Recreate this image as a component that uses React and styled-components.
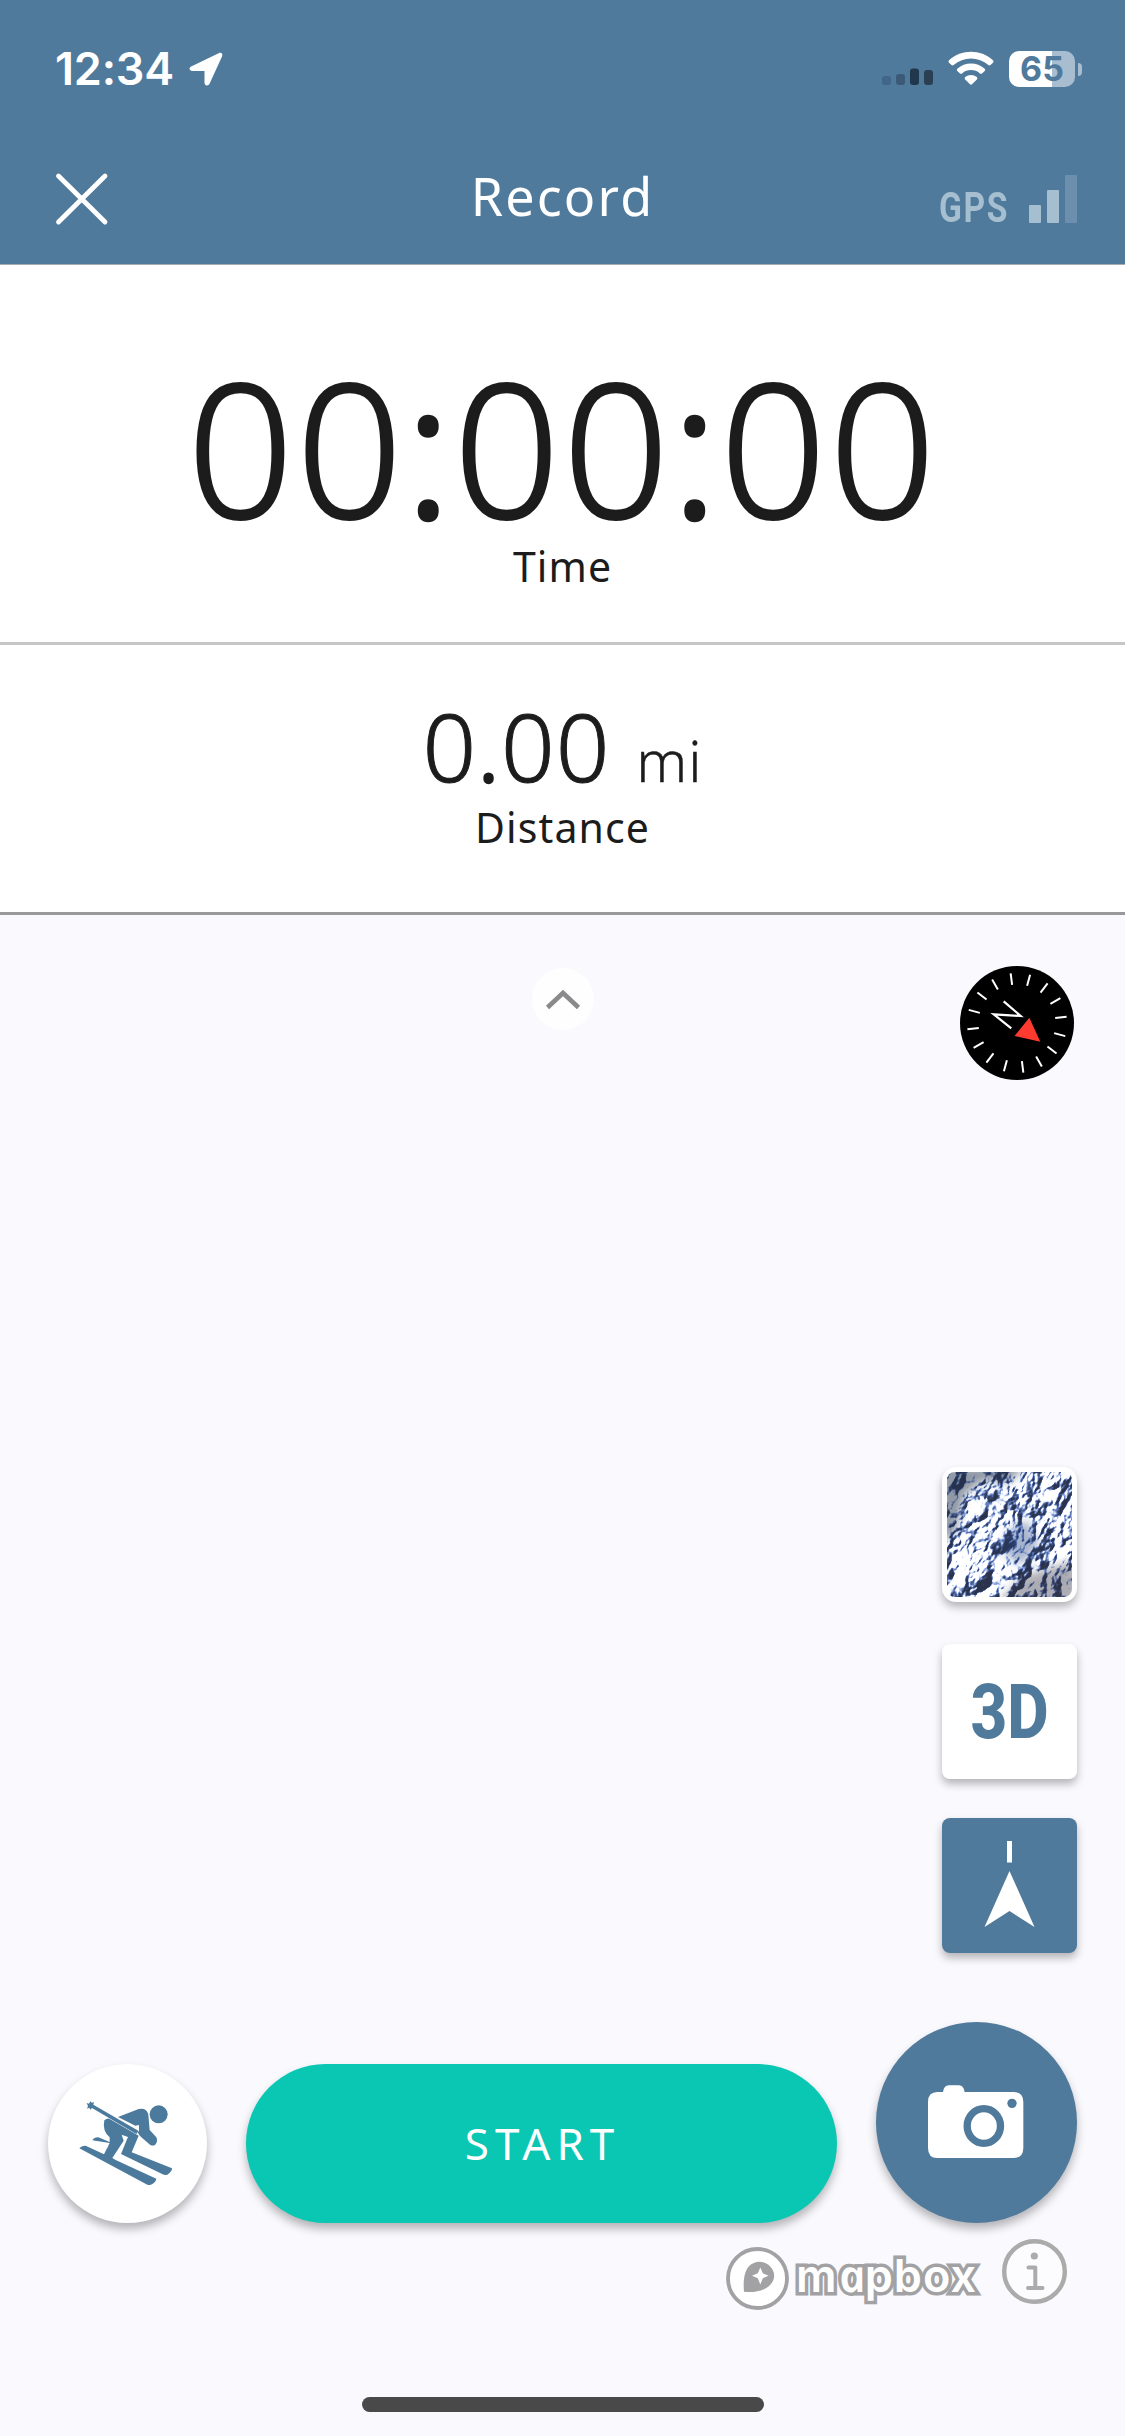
import React from 'react';
import styled, { createGlobalStyle } from 'styled-components';

const BLUE = '#507a9b';
const INK = '#1c1c1c';

const GlobalStyle = createGlobalStyle`
  * {
    box-sizing: border-box;
  }

  body {
    margin: 0;
    font-family: 'Noto Sans', 'Open Sans', sans-serif;
  }

  svg {
    display: block;
    flex: none;
  }
`;

const Screen = styled.div`
  width: 1125px;
  height: 2436px;
  display: flex;
  flex-direction: column;
  background: #f9f9fe;
  color: ${INK};
  overflow: hidden;
`;

const Header = styled.header`
  height: 265px;
  background: ${BLUE};
  border-bottom: 1px solid #a3adb5;
  color: #fff;
`;

const StatusBar = styled.div`
  height: 138px;
  padding: 0 43px 0 55px;
  display: flex;
  align-items: center;
  justify-content: space-between;
`;

const StatusGroup = styled.div`
  display: flex;
  align-items: center;
  gap: ${props => props.gap}px;
`;

const Clock = styled.span`
  font-family: 'Inter', sans-serif;
  font-weight: 600;
  font-size: 45px;
  line-height: 50px;
  letter-spacing: -0.2px;
`;

const Battery = styled.div`
  display: flex;
  align-items: center;
  gap: 3px;
`;

const BatteryBody = styled.div`
  width: 66px;
  height: 36px;
  border-radius: 10px;
  background: linear-gradient(to right, #fff ${props => props.level}%, #a8bdd0 ${props => props.level}%);
  color: ${BLUE};
  font: 700 34px/36px 'Inter', sans-serif;
  text-align: center;
`;

const BatteryTip = styled.div`
  width: 4px;
  height: 13px;
  border-radius: 0 5px 5px 0;
  background: #a8bdd0;
`;

const NavBar = styled.div`
  height: 121px;
  padding: 0 48px;
  display: grid;
  grid-template-columns: 1fr auto 1fr;
  align-items: center;
`;

const CloseButton = styled.button`
  justify-self: start;
  margin-left: 7px;
  padding: 0;
  border: 0;
  background: none;
`;

const Title = styled.h1`
  margin: 0;
  padding-bottom: 6px;
  font-size: 52px;
  font-weight: 400;
  line-height: 60px;
  letter-spacing: 2.2px;
`;

const GpsStatus = styled.div`
  justify-self: end;
  height: 48px;
  display: flex;
  align-items: flex-end;
  gap: 23px;
`;

const GpsLabel = styled.span`
  width: 67px;
  font: 700 42px/30px 'Roboto', sans-serif;
  letter-spacing: 2px;
  color: #a5bfd0;
  transform: scaleX(0.8);
  transform-origin: left bottom;
`;

const GpsBars = styled.div`
  display: flex;
  align-items: flex-end;
  gap: 6px;
`;

const GpsBar = styled.span`
  width: 12px;
  height: ${props => props.h}px;
  border-radius: 1px;
  background: ${props => (props.$on ? '#a5bfd0' : '#6b8fac')};
`;

const Stat = styled.section`
  height: ${props => props.height}px;
  padding-top: ${props => props.top}px;
  display: flex;
  flex-direction: column;
  align-items: center;
  background: #fff;
  border-bottom: 3px solid ${props => props.line};
`;

const Timer = styled.div`
  font-size: 187px;
  font-weight: 300;
  line-height: 140px;
  letter-spacing: 2.4px;
  -webkit-text-stroke: 2px ${INK};
`;

const Distance = styled.div`
  height: 70px;
  display: flex;
  align-items: baseline;
  font-size: 94px;
  font-weight: 300;
  line-height: 70px;
  letter-spacing: 1px;
  -webkit-text-stroke: 1px ${INK};
`;

const Dots = styled.span`
  -webkit-text-stroke: 0.024em ${INK};
  stroke-linejoin: round;
`;

const Unit = styled.span`
  margin-left: 26px;
  font-size: 57px;
  -webkit-text-stroke: 0.4px ${INK};
`;

const StatLabel = styled.div`
  margin-top: ${props => props.gap}px;
  font-size: 41px;
  line-height: 50px;
  letter-spacing: 1.1px;
`;

const MapArea = styled.main`
  flex: 1;
  display: flex;
  flex-direction: column;
`;

const MapTop = styled.div`
  padding: 51px 51px 0;
  display: grid;
  grid-template-columns: 1fr auto 1fr;
  justify-items: end;
`;

const CollapseButton = styled.button`
  grid-column: 2;
  width: 62px;
  height: 62px;
  margin-top: 2px;
  padding: 2px 0 0;
  border: 0;
  border-radius: 50%;
  background: #fefefe;
  display: grid;
  place-items: center;
`;

const MapTools = styled.div`
  margin-top: 387px;
  padding-right: 48px;
  display: flex;
  flex-direction: column;
  align-items: flex-end;
  gap: 39px;
`;

const ToolButton = styled.button`
  width: 135px;
  height: 135px;
  margin: 0 0 ${props => props.space || 0}px;
  padding: 0;
  border: 0;
  border-radius: ${props => props.radius || 8}px;
  display: grid;
  place-items: center;
  background: ${props => (props.$active ? BLUE : '#fff')};
  box-shadow: 0 5px 9px rgba(0, 0, 0, 0.28);
`;

const ThreeD = styled.span`
  font: 800 76px/80px 'Roboto', sans-serif;
  color: ${BLUE};
  transform: scaleX(0.84);
`;

const ActionRow = styled.div`
  margin-top: 69px;
  padding: 0 48px;
  display: flex;
  align-items: flex-end;
  gap: 39px;
`;

const RoundButton = styled.button`
  width: ${props => props.size}px;
  height: ${props => props.size}px;
  padding: 0;
  border: 0;
  border-radius: 50%;
  display: grid;
  place-items: center;
  background: ${props => props.fill};
  box-shadow: 0 6px 10px rgba(0, 0, 0, 0.28);
`;

const StartButton = styled.button`
  flex: 1;
  height: 159px;
  padding: 0 0 2px 2px;
  border: 0;
  border-radius: 80px;
  background: #09c7b2;
  box-shadow: 0 6px 10px rgba(0, 0, 0, 0.28);
  color: #fff;
  font: 400 44px/60px 'Noto Sans', sans-serif;
  letter-spacing: 6px;
`;

const Attribution = styled.div`
  margin-top: 16px;
  padding-right: 58px;
  height: 72px;
  display: flex;
  justify-content: flex-end;
  align-items: flex-start;
`;

const Mapbox = styled.div`
  margin: 8px 24px 0 0;
  display: flex;
  align-items: center;
  gap: 7px;
`;

const Wordmark = styled.span`
  width: 182px;
  padding-bottom: 5px;
  font: 600 45px/56px 'Inter', sans-serif;
  letter-spacing: 1px;
  white-space: nowrap;
  color: #fff;
  -webkit-text-stroke: 7px #a2a2a4;
  stroke-linejoin: round;
  paint-order: stroke fill;
`;

// the italic "a" is single-storey; skewed back it stands upright in the wordmark
const RoundA = styled.span`
  display: inline-block;
  font-family: 'Noto Sans', sans-serif;
  font-style: italic;
  font-weight: 600;
  line-height: 1;
  transform: skewX(12deg);
`;

const HomeIndicator = styled.div`
  width: 402px;
  height: 15px;
  margin: 86px auto 0;
  border-radius: 8px;
  background: #494949;
`;

const LocationArrow = () => (
  <svg width="36" height="36" viewBox="0 0 36 36">
    <path
      d="M3 16.5 31.5 2.6Q34 2 33.4 4.8L20.6 32.8Q18 35 17.3 32V19.3H4.5Q1 18.5 3 16.5Z"
      fill="#fff"
      stroke="#fff"
      strokeWidth="1.6"
      strokeLinejoin="round"
    />
  </svg>
);

const CellSignal = () => (
  <svg width="51" height="36" viewBox="0 0 51 36">
    <rect x="0" y="25" width="9" height="9" rx="3" fill="#416688" />
    <rect x="14" y="23" width="9" height="11" rx="3" fill="#3b5a78" />
    <rect x="28" y="17.5" width="9" height="16.5" rx="3" fill="#21374b" />
    <rect x="42" y="19" width="9" height="15" rx="3" fill="#2b3f52" />
  </svg>
);

const Wifi = () => (
  <svg width="46" height="36" viewBox="0 0 46 36" fill="#fff">
    <path d="M1 9.3C13.5-2 32.5-2 45 9.3Q46 10.6 45 11.7L42.5 14.1Q41.5 14.8 40.4 14C30.5 5.3 15.5 5.3 5.6 14Q4.5 14.8 3.5 14.1L1 11.7Q0 10.6 1 9.3Z" />
    <path d="M9.3 17.7C17 10.8 29 10.8 36.7 17.7Q37.8 18.8 36.7 20L34 22.5Q33 23.2 31.9 22.4C27 18 19 18 14.1 22.4Q13 23.2 12 22.5L9.3 20Q8.2 18.8 9.3 17.7Z" />
    <path d="M17.2 26C20.5 23.2 25.5 23.2 28.8 26Q30 27.3 28.8 28.5L24 33.3Q23 34.1 22 33.3L17.2 28.5Q16 27.3 17.2 26Z" />
  </svg>
);

const CloseIcon = () => (
  <svg width="54" height="54" viewBox="0 0 54 54">
    <path d="M3.5 4 50 50M50 4 3.5 50" stroke="#fff" strokeWidth="4.8" strokeLinecap="round" />
  </svg>
);

const TICKS = Array.from({ length: 16 }, (_, i) => i * 22.5 - 7.3);

const Compass = () => (
  <svg width="114" height="114" viewBox="-57 -57 114 114">
    <circle r="57" fill="#000" />
    {TICKS.map(a => (
      <path key={a} d="M0-38.5V-50" stroke="#fff" strokeWidth="2" transform={`rotate(${a})`} />
    ))}
    <path d="M-13.3-21.7 3.7-7-23.3-8.7-5.7 5.3" fill="none" stroke="#fff" strokeWidth="2.2" />
    <path d="M12.3-5.3-2.5 13 23.3 18.7Z" fill="#ff3b30" />
  </svg>
);

// Snowy terrain tile: noise relief lit from the upper left, mapped to navy, blue and white
const SatelliteTile = () => (
  <svg width="125" height="125" viewBox="0 0 125 125">
    <defs>
      <clipPath id="tile">
        <rect width="125" height="125" rx="8" />
      </clipPath>
      <filter id="terrain" x="0" y="0" width="100%" height="100%" colorInterpolationFilters="sRGB">
        <feTurbulence type="turbulence" baseFrequency="0.03 0.024" numOctaves="5" seed="5" />
        <feColorMatrix values="0 0 0 0 0  0 0 0 0 0  0 0 0 0 0  0.8 0.4 0 0 0" />
        <feDiffuseLighting surfaceScale="13" diffuseConstant="1.2" lightingColor="#fff">
          <feDistantLight azimuth="190" elevation="40" />
        </feDiffuseLighting>
        <feComponentTransfer>
          <feFuncR type="table" tableValues="0.17 0.2 0.27 0.38 0.55 0.78 0.95 1 1" />
          <feFuncG type="table" tableValues="0.2 0.25 0.35 0.48 0.64 0.83 0.97 1 1" />
          <feFuncB type="table" tableValues="0.3 0.39 0.55 0.72 0.85 0.95 1 1 1" />
        </feComponentTransfer>
      </filter>
      <filter id="soft" x="-20%" y="-20%" width="140%" height="140%">
        <feGaussianBlur stdDeviation="4" />
      </filter>
    </defs>
    <g clipPath="url(#tile)">
      <g transform="rotate(28 62 62)">
        <rect x="-40" y="-40" width="205" height="205" filter="url(#terrain)" />
      </g>
      <g filter="url(#soft)">
        <path d="M-5-5H78L62 10 36 9 18 22 8 62-5 70Z" fill="#25304a" opacity="0.5" />
        <path d="M60 60 80 48 92 72 76 92 58 84Z" fill="#2b4680" opacity="0.4" />
        <path d="M52 130 76 104 130 88V130Z" fill="#30333f" opacity="0.4" />
      </g>
    </g>
  </svg>
);

const HeadingIcon = () => (
  <svg width="135" height="135" viewBox="0 0 135 135" fill="#fff">
    <path d="M65 23H70V44.5H65Z" />
    <path d="M67.5 53 92.5 109 67.5 93 42.5 109Z" />
  </svg>
);

const SkierIcon = () => (
  <svg width="159" height="159" viewBox="54 71 477 477" fill="#4c7a9d">
    <circle cx="386" cy="222" r="27" />
    {/* pole */}
    <path d="M170 188 177 190 181 183 185 187 192 186 190 193 325 271 319 281 186 203 181 208 178 202 171 205 174 197Z" />
    {/* upper body and arm */}
    <path d="M264 230 326 206Q350 201 355 223L359 269 379 291Q385 303 375 314 368 318 360 313L330 287 322 275 327 272V254L316 256Z" />
    {/* hips and front leg */}
    <path d="M223 240Q230 234 238 235L326 286 305 336 426 384Q427 393 412 403 405 406 398 402L273 341 291 297 294 290 275 283 281 301 247 353 257 359 379 415Q378 424 366 432 360 435 352 433L148 324Q154 315 167 316L222 342 239 308 187 300Q193 290 205 291L239 305 239 291Q216 272 223 240Z" />
    <path d="M213 310 236 320 228 322 206 313Z" fill="#fff" />
  </svg>
);

const CameraIcon = () => (
  <svg width="201" height="201" viewBox="48 66 603 603">
    <path
      d="M232 276H249Q252 256 266 256H297Q311 257 314 276H460Q490 276 490 306V444Q490 474 460 474H232Q204 474 204 444V306Q204 276 232 276Z"
      fill="#fff"
    />
    <circle cx="456" cy="310" r="14" fill={BLUE} />
    <ellipse cx="371.5" cy="378" rx="50" ry="52" fill="none" stroke={BLUE} strokeWidth="22" />
  </svg>
);

const MapboxMark = () => (
  <svg width="63" height="63" viewBox="0 0 63 63">
    <circle cx="31.5" cy="31.5" r="29.5" fill="#fff" stroke="#a2a2a4" strokeWidth="3.8" />
    <path d="M18 44.8C17 33 18.5 24 23 19.2 28 13.8 37 13 43 18.2 49.5 24 49.8 32 44.5 37.5 39 43.5 30 45.8 18 44.8Z" fill="#a2a2a4" />
    <path d="M34.3 20.5 36.8 26.3 42.5 28.8 36.8 31.3 34.3 37.5 31.8 31.3 26 28.8 31.8 26.3Z" fill="#fff" />
  </svg>
);

const InfoIcon = () => (
  <svg width="65" height="65" viewBox="0 0 65 65" fill="none" stroke="#ababab">
    <circle cx="32.5" cy="32.5" r="30.3" fill="#fcfcfe" strokeWidth="4.4" />
    <circle cx="32.3" cy="17" r="3.6" fill="#ababab" stroke="none" />
    <path d="M26.5 28.5H33.3V49M26 49H40.5" strokeWidth="4" strokeLinecap="round" strokeLinejoin="round" />
  </svg>
);

const App = () => (
  <>
    <GlobalStyle />
    <Screen>
      <Header>
        <StatusBar>
          <StatusGroup gap={14}>
            <Clock>12:34</Clock>
            <LocationArrow />
          </StatusGroup>
          <StatusGroup gap={15}>
            <CellSignal />
            <Wifi />
            <Battery>
              <BatteryBody level={65}>65</BatteryBody>
              <BatteryTip />
            </Battery>
          </StatusGroup>
        </StatusBar>
        <NavBar>
          <CloseButton aria-label="Close">
            <CloseIcon />
          </CloseButton>
          <Title>Record</Title>
          <GpsStatus>
            <GpsLabel>GPS</GpsLabel>
            <GpsBars>
              <GpsBar h={18} $on />
              <GpsBar h={33} $on />
              <GpsBar h={48} />
            </GpsBars>
          </GpsStatus>
        </NavBar>
      </Header>

      <Stat height={380} top={111} line="#c6c6c6">
        <Timer>
          00<Dots>:</Dots>00<Dots>:</Dots>00
        </Timer>
        <StatLabel gap={25}>Time</StatLabel>
      </Stat>
      <Stat height={270} top={66} line="#999">
        <Distance>
          <span>0<Dots>.</Dots>00</span>
          <Unit>mi</Unit>
        </Distance>
        <StatLabel gap={21}>Distance</StatLabel>
      </Stat>

      <MapArea>
        <MapTop>
          <CollapseButton>
            <svg width="36" height="22" viewBox="0 0 36 22">
              <path d="M2.5 18.5 18 4 33.5 18.5" fill="none" stroke="#8a8a8c" strokeWidth="4.6" />
            </svg>
          </CollapseButton>
          <Compass />
        </MapTop>
        <MapTools>
          <ToolButton radius={14} space={3}>
            <SatelliteTile />
          </ToolButton>
          <ToolButton>
            <ThreeD>3D</ThreeD>
          </ToolButton>
          <ToolButton $active>
            <HeadingIcon />
          </ToolButton>
        </MapTools>
        <ActionRow>
          <RoundButton size={159} fill="#fff">
            <SkierIcon />
          </RoundButton>
          <StartButton>START</StartButton>
          <RoundButton size={201} fill={BLUE}>
            <CameraIcon />
          </RoundButton>
        </ActionRow>
        <Attribution>
          <Mapbox>
            <MapboxMark />
            <Wordmark>
              m<RoundA>a</RoundA>pbox
            </Wordmark>
          </Mapbox>
          <InfoIcon />
        </Attribution>
        <HomeIndicator />
      </MapArea>
    </Screen>
  </>
);

export default App;
